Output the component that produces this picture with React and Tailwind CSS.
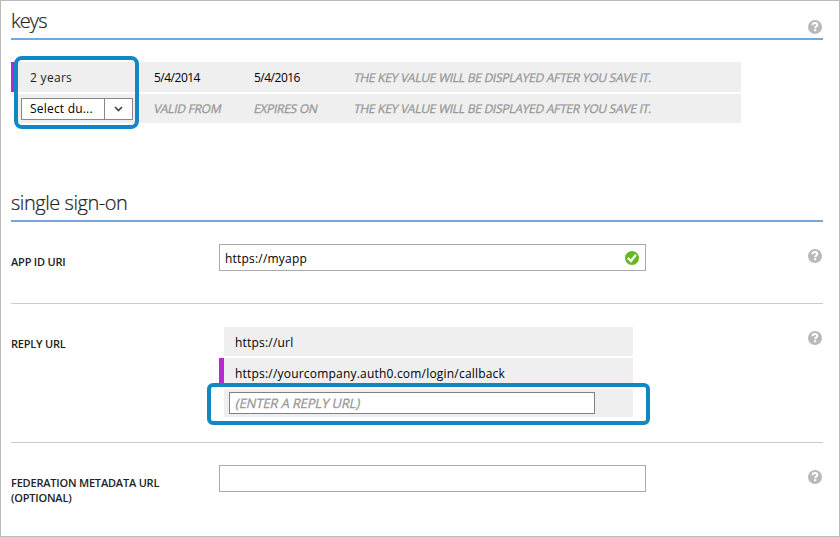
import React from "react";

const HelpIcon = () => (
  <svg width="14" height="14" viewBox="0 0 14 14" className="block shrink-0">
    <circle cx="7" cy="7" r="7" fill="#b9b9b9" />
    <path d="M4.5 5.2C4.6 3.7 5.6 3.1 7 3.1c1.4 0 2.3.7 2.3 1.8 0 1.5-2.1 1.5-2.1 3.3" fill="none" stroke="#fff" strokeWidth="2" />
    <rect x="6.1" y="9.2" width="2.1" height="2" fill="#fff" />
  </svg>
);

const CheckIcon = () => (
  <svg width="14" height="14" viewBox="0 0 14 14" className="block shrink-0">
    <circle cx="7" cy="7" r="7" fill="#67b720" />
    <path d="M2.9 6.9 6 10 10.9 3.8" fill="none" stroke="#fff" strokeWidth="2.2" />
  </svg>
);

const SectionTitle = ({ children, help }) => (
  <div className="flex h-[39px] shrink-0 items-start justify-between border-b-2 border-[#72a8da]">
    {children}
    {help && (
      <div className="mt-[19px] mr-px">
        <HelpIcon />
      </div>
    )}
  </div>
);

const Field = ({ label, className, helpClass, children }) => (
  <div className={"flex shrink-0 items-start " + className}>
    <div className="w-[208px] shrink-0 text-[11px] leading-[15px] font-semibold tracking-[-0.2px] text-[#222]">{label}</div>
    <div className="w-[427px] shrink-0">{children}</div>
    <div className={"mr-px ml-auto " + helpClass}>
      <HelpIcon />
    </div>
  </div>
);

const Hint = ({ children, className = "text-[12px] tracking-[-0.26px]" }) => (
  <span className={"inline-block -skew-x-12 text-[#999] [-webkit-text-stroke:0.3px_#999] " + className}>{children}</span>
);

export default function App() {
  return (
    <div className="flex h-[537px] w-[840px] flex-col border border-[#bbb] bg-white pr-[16px] pl-[10px] font-['Open_Sans','Noto_Sans',sans-serif] whitespace-nowrap">
      <SectionTitle help>
        <h1 className="mt-[7px] text-[20px] leading-[26px] font-light tracking-[-0.9px] text-[#222] [-webkit-text-stroke:0.2px_#222]">keys</h1>
      </SectionTitle>

      <div className="relative mt-[22px] w-[730px] text-[12px] text-black">
        <div className="flex h-[30px] items-center border-l-[5px] border-[#b62bcd] bg-[#efefef] pt-[2px]">
          <span className="w-[124px] pl-[14px] tracking-[0.3px] text-[#222]">2 years</span>
          <span className="w-[100px] pl-[14px] tracking-[-0.5px]">5/4/2014</span>
          <span className="w-[100px] pl-[14px] tracking-[-0.5px]">5/4/2016</span>
          <span className="pl-[14px]">
            <Hint>THE KEY VALUE WILL BE DISPLAYED AFTER YOU SAVE IT.</Hint>
          </span>
        </div>
        <div className="mt-[2px] ml-[5px] flex h-[29px] items-center bg-[#efefef]">
          <div className="w-[124px] pl-[5px]">
            <div className="flex h-[22px] w-[112px] border border-[#888] bg-white">
              <span className="flex w-[83px] items-center border-r border-[#888] pl-[8px] tracking-[0.2px]">Select du...</span>
              <span className="flex flex-1 items-center justify-center">
                <svg width="9" height="6" viewBox="0 0 9 6">
                  <path d="M1 1 4.5 4.5 8 1" fill="none" stroke="#444" strokeWidth="1.7" />
                </svg>
              </span>
            </div>
          </div>
          <span className="w-[100px] pl-[14px]">
            <Hint>VALID FROM</Hint>
          </span>
          <span className="w-[100px] pl-[14px]">
            <Hint>EXPIRES ON</Hint>
          </span>
          <span className="pl-[14px]">
            <Hint>THE KEY VALUE WILL BE DISPLAYED AFTER YOU SAVE IT.</Hint>
          </span>
        </div>
        <div className="absolute top-[-6px] left-[3px] h-[73px] w-[125px] rounded-[8px] border-4 border-[#1287c3]" />
      </div>

      <div className="mt-[60px]">
        <SectionTitle>
          <h2 className="mt-[7px] text-[20px] leading-[26px] font-light tracking-[-0.45px] text-[#222] [-webkit-text-stroke:0.2px_#222]">single sign-on</h2>
        </SectionTitle>
      </div>

      <Field
        className="h-[82px] border-b border-[#ccc] pt-[22px]"
        helpClass="mt-[5px]"
        label={<div className="pt-[10px]">APP ID URI</div>}
      >
        <div className="flex h-[27px] items-center justify-between border border-[#aaa] pr-[6px] pl-[5px] text-[12px] text-black">
          <span className="pt-[2px] tracking-[0.2px]">https://myapp</span>
          <CheckIcon />
        </div>
      </Field>

      <Field
        className="h-[139px] border-b border-[#ccc] pt-[23px]"
        helpClass="mt-[4px]"
        label={<div className="pt-[9px]">REPLY URL</div>}
      >
        <div className="relative w-[414px] text-[12px] tracking-[0.2px] text-black">
          <div className="ml-[5px] flex h-[29px] items-center bg-[#efefef] pt-[2px] pl-[11px]">https://url</div>
          <div className="mt-[2px] flex h-[29px] items-center border-l-[5px] border-[#b62bcd] bg-[#efefef] pt-[2px] pl-[11px]">
            https://yourcompany.auth0.com/login/callback
          </div>
          <div className="mt-[2px] ml-[5px] flex h-[28px] items-center bg-[#efefef] pl-[5px]">
            <div className="flex h-[22px] w-[366px] items-center border border-[#808080] bg-white pt-[2px] pl-[6px]">
              <Hint className="text-[13px] tracking-[-0.15px]">(ENTER A REPLY URL)</Hint>
            </div>
          </div>
          <div className="absolute top-[56px] left-[-12px] h-[42px] w-[443px] rounded-[6px] border-4 border-[#1287c3]" />
        </div>
      </Field>

      <Field
        className="pt-[22px]"
        helpClass="mt-[5px]"
        label={
          <div className="pt-[10px]">
            FEDERATION METADATA URL
            <br />
            (OPTIONAL)
          </div>
        }
      >
        <div className="h-[27px] border border-[#aaa]" />
      </Field>
    </div>
  );
}
